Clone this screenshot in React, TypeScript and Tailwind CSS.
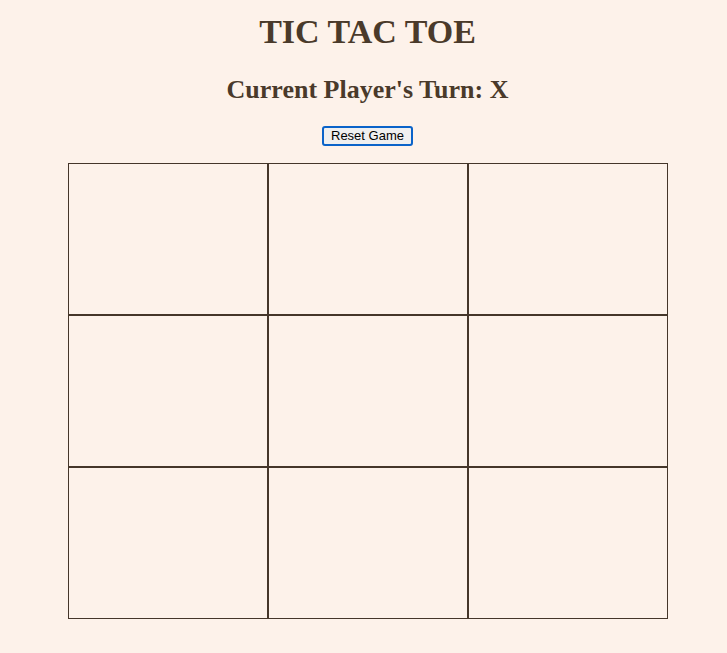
const cells = Array.from({ length: 9 }, (_, i) => i);

export default function App() {
  return (
    <div className="min-h-[653px] bg-[#fdf2ea] pl-2 text-[#4a3a2a]" style={{ fontFamily: "'Liberation Serif', serif" }}>
      <div className="flex flex-col items-center pt-[12px]">
        <h1 className="text-[34px] font-bold leading-[40px]">TIC TAC TOE</h1>
        <h2 className="mt-[23px] text-[26px] font-bold leading-[30px]">Current Player's Turn: X</h2>
        <button
          className="mt-[21px] h-[20px] w-[91px] rounded-[3px] border-2 border-[#0a63c9] bg-[#efefef] text-[13px] leading-[16px] text-black"
          style={{ fontFamily: "'Liberation Sans', Arial, sans-serif" }}
        >
          Reset Game
        </button>
        <div className="mt-[17px] grid grid-cols-[repeat(3,200px)] grid-rows-[repeat(3,152px)]">
          {cells.map((i) => (
            <div key={i} className="border border-[#45362a] bg-[#fdf2ea]" />
          ))}
        </div>
      </div>
    </div>
  );
}
